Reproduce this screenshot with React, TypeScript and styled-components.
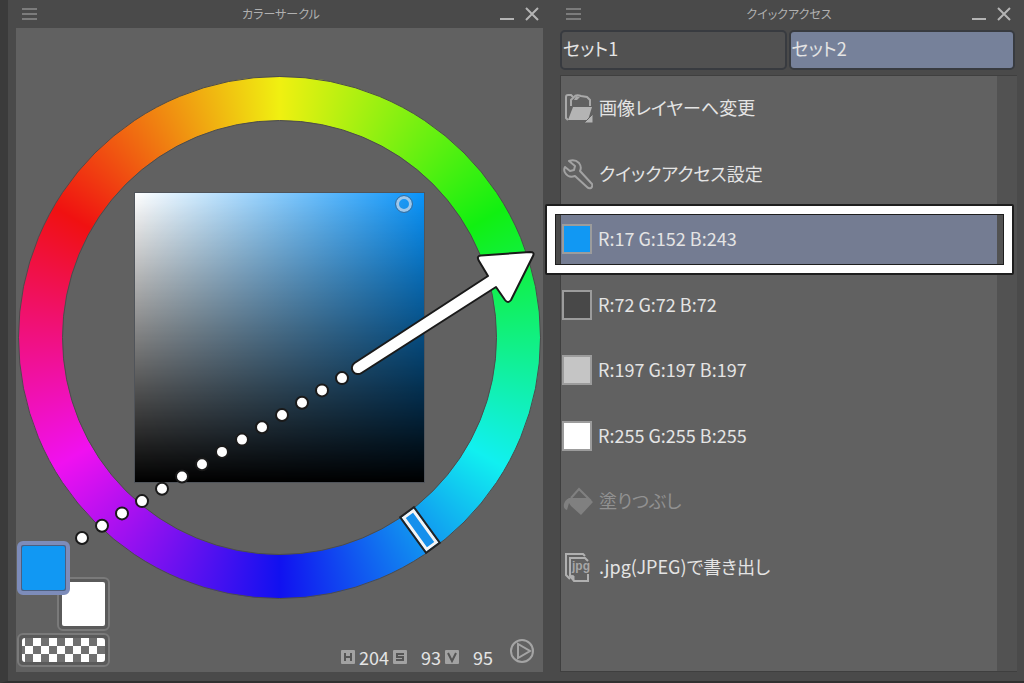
import React from "react";
import styled, { createGlobalStyle, css } from "styled-components";

const GlobalStyle = createGlobalStyle`
  *, *::before, *::after { box-sizing: border-box; }
  body {
    margin: 0;
    background: #4a4a4a;
    color: #e4e4e4;
    font-family: "Noto Sans CJK JP", "Liberation Sans", sans-serif;
    font-size: 18px;
    font-feature-settings: "palt";
  }
  button {
    font: inherit;
    font-feature-settings: inherit;
    color: inherit;
    padding: 0;
    border: 0;
    background: none;
    cursor: pointer;
  }
  ul { list-style: none; margin: 0; padding: 0; }
`;

const Workspace = styled.main`
  position: relative;
  display: grid;
  grid-template-columns: 544fr 472fr;
  min-height: 100vh;
  border-left: 8px solid #3b3b3b;
  border-bottom: 2px solid #303030;
  overflow: hidden;
`;

const Panel = styled.section`
  display: flex;
  flex-direction: column;
  min-width: 0;
  padding: 0 8px 9px;
  background: #4a4a4a;
`;

const TitleBar = styled.header`
  display: grid;
  grid-template-columns: 1fr auto 1fr;
  align-items: center;
  height: 28px;
  padding: 0 3px 0 5px;
  color: #b0b0b0;
`;

const Title = styled.h2`
  margin: 0;
  font-size: 12px;
  line-height: 16px;
  font-weight: 400;
`;

const WindowButtons = styled.div`
  display: flex;
  justify-content: flex-end;
  gap: 8px;
`;

const IconButton = styled.button`
  display: block;
  width: 17px;
  height: 16px;
  svg { display: block; }
`;

const ColorBody = styled.div`
  flex: 1;
  display: grid;
  margin-right: 1px;
  background: #616161;
  > * { grid-area: 1 / 1; }
`;

const Wheel = styled.div`
  position: relative;
  display: grid;
  align-self: start;
  margin: 48px 2px 0;
  padding: 43px;
  aspect-ratio: 1;
  border-radius: 50%;
  border: 1px solid #4c4c4c;
  background: conic-gradient(#f0f011, #11f011, #11f0f0, #1111f0, #f011f0, #f01111, #f0f011) border-box;
`;

const WheelCenter = styled.div`
  display: grid;
  place-items: center;
  border-radius: 50%;
  border: 1px solid #4c4c4c;
  background: #616161;
`;

const SaturationSquare = styled.div`
  position: relative;
  width: 67.4%;
  aspect-ratio: 1;
  border: 1px solid #50545a;
  background:
    linear-gradient(to bottom, transparent, #000),
    linear-gradient(to right, #fff, #0a94fa);
`;

const SquareKnob = styled.div`
  position: absolute;
  left: 93%;
  top: 4%;
  width: 16px;
  height: 16px;
  transform: translate(-50%, -50%);
  border: 3px solid #9fc7ea;
  border-radius: 50%;
  outline: 1px solid #3e6f9c;
`;

const HueKnob = styled.div`
  position: absolute;
  left: 77%;
  top: 87%;
  width: 15px;
  height: 42px;
  transform: translate(-50%, -50%) rotate(-36deg);
  border: 3px solid #f4f4f4;
  outline: 2px solid #222;
  background: #1590ec;
`;

const ColorFooter = styled.div`
  align-self: end;
  display: flex;
  justify-content: space-between;
  align-items: flex-end;
  padding: 0 8px 5px 1px;
`;

const Swatches = styled.div`
  display: grid;
  grid-template-columns: 40px 13px 40px;
  grid-template-rows: 36px 18px 36px 2px 34px;
`;

const Swatch = styled.button<{ $color: string; $kind: "main" | "sub" }>`
  z-index: ${(p) => (p.$kind === "main" ? 1 : 0)};
  grid-area: ${(p) => (p.$kind === "main" ? "1 / 1 / 3 / 3" : "2 / 2 / 4 / 4")};
  border-radius: 6px;
  ${(p) =>
    p.$kind === "main"
      ? css`border: 4px solid #7d8cba; background: #4c5f80; padding: 1px;`
      : css`border: 2px solid #7a7a7a; background: #5a5a5a; padding: 3px;`}
  &::before {
    content: "";
    display: block;
    width: 100%;
    height: 100%;
    border-radius: 2px;
    background: ${(p) => p.$color};
  }
`;

const TransparentSwatch = styled.button`
  grid-area: 5 / 1 / 6 / 4;
  padding: 3px;
  border: 2px solid #7a7a7a;
  border-radius: 6px;
  background: #5a5a5a;
  &::before {
    content: "";
    display: block;
    height: 100%;
    border-radius: 3px;
    background: repeating-conic-gradient(#707070 0 25%, #fff 0 50%) -5px 0 / 16px 16px;
  }
`;

const Readout = styled.div`
  display: flex;
  align-items: flex-end;
  gap: 2px;
`;

const Channel = styled.div`
  display: flex;
  align-items: center;
  justify-content: space-between;
  width: 50px;
  line-height: 20px;
  padding-right: 2px;
`;

const PlayButton = styled.button`
  width: 26px;
  height: 28px;
  margin: 0 0 2px 12px;
`;

const Tabs = styled.div`
  display: grid;
  grid-template-columns: 1fr 1fr;
  gap: 2px;
  padding: 2px 1px 5px 0;
`;

const Tab = styled.button<{ $active?: boolean }>`
  height: 40px;
  padding: 0 1px 4px;
  border: 2px solid #383b40;
  border-radius: 5px;
  background: ${(p) => (p.$active ? "#76819a" : "#515151")};
  text-align: left;
`;

const ListFrame = styled.div`
  flex: 1;
  border: 1px solid #3f3f3f;
  border-right-width: 0;
  padding: 6px 20px 0 0;
  margin-right: -1px;
  background: linear-gradient(#525252, #525252) right / 20px 100% no-repeat #616161;
`;

const List = styled.ul`
  display: flex;
  flex-direction: column;
  justify-content: space-between;
  height: 511px;
`;

const Item = styled.li<{ $selected?: boolean }>`
  position: relative;
  height: 52px;
  background: ${(p) => (p.$selected ? "#747c92" : "transparent")};
`;

const ItemButton = styled.button`
  display: flex;
  align-items: center;
  gap: 6px;
  width: 100%;
  height: 100%;
  padding-left: 1px;
  text-align: left;
  white-space: nowrap;
  &:disabled { color: #919191; cursor: default; }
  svg { display: block; }
`;

const Label = styled.span`
  padding-bottom: 2px;
  line-height: 24px;
`;

const Chip = styled.span<{ $color: string }>`
  width: 30px;
  height: 30px;
  border: 2px solid #9c9c9c;
  background: ${(p) => p.$color};
`;

const Callout = styled.div`
  position: absolute;
  inset: -9px -17px -10px -16px;
  border: 2px solid #1e1e1e;
  border-radius: 2px;
  z-index: 2;
  pointer-events: none;
  &::before {
    content: "";
    position: absolute;
    inset: 0;
    border: 8px solid #fff;
  }
  &::after {
    content: "";
    position: absolute;
    inset: 8px;
    border: 1px solid #1e1e1e;
  }
`;

const ArrowLayer = styled.svg`
  position: absolute;
  left: -8px;
  top: 0;
  z-index: 3;
  pointer-events: none;
`;

const MenuIcon = () => (
  <svg width="17" height="16" viewBox="0 0 17 16" stroke="#7c7c7c" strokeWidth="2">
    <path d="M1 3H16M1 8H16M1 13H16" />
  </svg>
);
const MinimizeIcon = () => (
  <svg width="17" height="16" viewBox="0 0 17 16" stroke="#b4b4b4" strokeWidth="2">
    <path d="M1 13H15" />
  </svg>
);
const CloseIcon = () => (
  <svg width="17" height="16" viewBox="0 0 17 16" stroke="#b4b4b4" strokeWidth="2">
    <path d="M2 2L14 14M14 2L2 14" />
  </svg>
);

const FolderIcon = () => (
  <svg width="31" height="32" viewBox="0 0 31 32" fill="none">
    <path d="M6 28L4 26V5Q4 3 6 3H9L11 5" stroke="#a9a9a9" strokeWidth="2" />
    <path d="M9 14V8L12 5Q14 2 19 4L25 5L28 8V14" stroke="#a9a9a9" strokeWidth="2" />
    <path d="M12 8L14 4L18 5L15 8Z" fill="#a9a9a9" />
    <path d="M11 15H30L26 28H6Z" fill="#b4b4b4" />
    <path d="M31 22V31H22Z" fill="#b4b4b4" stroke="#616161" />
  </svg>
);
const WrenchIcon = () => (
  <svg width="31" height="32" viewBox="0 0 31 32" fill="none" stroke="#a2a2a2" strokeWidth="2" strokeLinejoin="round">
    <path d="M7 3Q13 1 17 5Q20 9 18 13L30 26Q31 28 29 30Q27 31 25 29L13 18Q7 20 4 16Q1 13 3 9L8 13L12 12L13 8Z" />
  </svg>
);
const BucketIcon = () => (
  <svg width="31" height="32" viewBox="0 0 31 32" fill="none">
    <path d="M9 13L17 4L29 16" stroke="#808080" strokeWidth="2" />
    <path d="M7 13H26L31 17L19 30L9 21L7 18L5 25Q1 24 2 19Q3 15 7 13Z" fill="#808080" />
  </svg>
);
const IconText = styled.text`
  font: 700 12px "Liberation Sans", sans-serif;
  fill: #a6a6a6;
`;
const JpegIcon = () => (
  <svg width="31" height="32" viewBox="0 0 31 32" fill="none" stroke="#b0b0b0" strokeWidth="2">
    <path d="M8 28L4 24V3H21L23 5" />
    <path d="M26 10L23 7H8V25L12 30H26V23" />
    <path d="M8 24V26L12 30V25Z" fill="#b0b0b0" strokeWidth="1" />
    <IconText x="10" y="19" stroke="none">jpg</IconText>
  </svg>
);

const PlayIcon = () => (
  <svg width="26" height="28" viewBox="0 0 26 28" fill="none" stroke="#a4a4a4" strokeWidth="2">
    <circle cx="13" cy="14" r="11" />
    <path d="M9 7V21L21 14Z" />
  </svg>
);

const channelMarks: Record<string, string> = {
  H: "M4 3V11M10 3V11M4 7H10",
  S: "M11 4H4V7H10V10H3",
  V: "M3 3L7 11L11 3",
};
const ChannelIcon = ({ name }: { name: string }) => (
  <svg width="14" height="14" viewBox="0 0 14 14" role="img" aria-label={name}>
    <rect width="14" height="14" rx="1" fill="#a2a2a2" />
    <path d={channelMarks[name]} fill="none" stroke="#555" strokeWidth="2" />
  </svg>
);

const channels = [
  { name: "H", value: 204 },
  { name: "S", value: 93 },
  { name: "V", value: 95 },
];

const items: { label: string; icon?: React.ReactNode; color?: string; selected?: boolean; disabled?: boolean }[] = [
  { label: "画像レイヤーへ変更", icon: <FolderIcon /> },
  { label: "クイックアクセス設定", icon: <WrenchIcon /> },
  { label: "R:17 G:152 B:243", color: "#1198f3", selected: true },
  { label: "R:72 G:72 B:72", color: "#484848" },
  { label: "R:197 G:197 B:197", color: "#c5c5c5" },
  { label: "R:255 G:255 B:255", color: "#ffffff" },
  { label: "塗りつぶし", icon: <BucketIcon />, disabled: true },
  { label: ".jpg(JPEG)で書き出し", icon: <JpegIcon /> },
];

const PanelTitle = ({ children }: { children: string }) => (
  <TitleBar>
    <IconButton aria-label="メニュー"><MenuIcon /></IconButton>
    <Title>{children}</Title>
    <WindowButtons>
      <IconButton aria-label="最小化"><MinimizeIcon /></IconButton>
      <IconButton aria-label="閉じる"><CloseIcon /></IconButton>
    </WindowButtons>
  </TitleBar>
);

const dots = Array.from({ length: 14 }, (_, i) => ({ x: 82 + i * 20, y: 538 - i * 12.3 }));

const Arrow = () => (
  <ArrowLayer width="560" height="600" viewBox="0 0 560 600" aria-hidden="true">
    {dots.map((d) => (
      <circle key={d.x} cx={d.x} cy={d.y} r="6" fill="#fff" stroke="#1a1a1a" strokeWidth="2" />
    ))}
    <path
      d="M354.5 363L488 276L479 261Q476 256 481 255.500L530 252Q535 252 533 256L511 300Q508 304 505 300L496 287L361.500 373A6 6 0 0 1 354.500 363Z"
      fill="#fff"
      stroke="#1a1a1a"
      strokeWidth="2"
      strokeLinejoin="round"
    />
  </ArrowLayer>
);

export default function App() {
  return (
    <>
      <GlobalStyle />
      <Workspace>
        <Panel>
          <PanelTitle>カラーサークル</PanelTitle>
          <ColorBody>
            <Wheel>
              <WheelCenter>
                <SaturationSquare>
                  <SquareKnob />
                </SaturationSquare>
              </WheelCenter>
              <HueKnob />
            </Wheel>
            <ColorFooter>
              <Swatches>
                <Swatch $kind="main" $color="#1198f3" aria-label="メインカラー" />
                <Swatch $kind="sub" $color="#ffffff" aria-label="サブカラー" />
                <TransparentSwatch aria-label="透明色" />
              </Swatches>
              <Readout>
                {channels.map((c) => (
                  <Channel key={c.name}>
                    <ChannelIcon name={c.name} />
                    <span>{c.value}</span>
                  </Channel>
                ))}
                <PlayButton aria-label="切り替え"><PlayIcon /></PlayButton>
              </Readout>
            </ColorFooter>
          </ColorBody>
        </Panel>
        <Panel>
          <PanelTitle>クイックアクセス</PanelTitle>
          <Tabs role="tablist">
            <Tab role="tab" aria-selected={false}>セット1</Tab>
            <Tab role="tab" aria-selected $active>セット2</Tab>
          </Tabs>
          <ListFrame>
            <List>
              {items.map((item) => (
                <Item key={item.label} $selected={item.selected}>
                  <ItemButton disabled={item.disabled}>
                    {item.color ? <Chip $color={item.color} /> : item.icon}
                    <Label>{item.label}</Label>
                  </ItemButton>
                  {item.selected && <Callout />}
                </Item>
              ))}
            </List>
          </ListFrame>
        </Panel>
        <Arrow />
      </Workspace>
    </>
  );
}
